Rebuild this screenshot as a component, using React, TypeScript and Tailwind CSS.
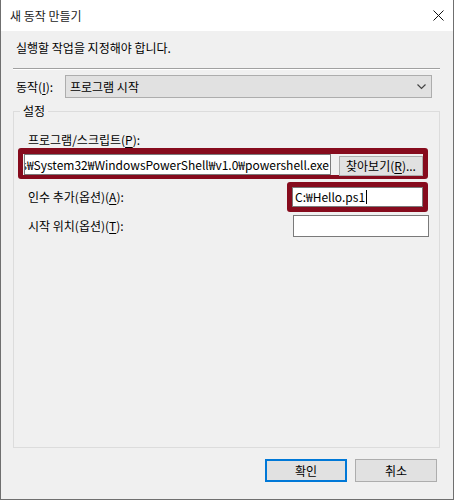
import { ReactNode } from "react";

const font = { fontFamily: '"Noto Sans CJK KR", "Noto Sans", sans-serif' };

const Key = ({ children }: { children: ReactNode }) => <span className="underline underline-offset-2">{children}</span>;

const CloseIcon = () => (
  <svg width="11" height="11" viewBox="0 0 11 11" className="text-[#111]">
    <path d="M0.5 0.5 L10.5 10.5 M10.5 0.5 L0.5 10.5" stroke="currentColor" strokeWidth="1" fill="none" />
  </svg>
);

const Chevron = () => (
  <svg width="9" height="6" viewBox="0 0 9 6" className="text-[#444]">
    <path d="M0.5 0.5 L4.5 4.5 L8.5 0.5" stroke="currentColor" strokeWidth="1.2" fill="none" />
  </svg>
);

const App = () => {
  return (
    <div
      className="w-[454px] h-[500px] flex flex-col bg-[#f0f0f0] border-l border-r border-b border-[#6f6f6f] text-[12px] leading-4 text-black"
      style={font}
    >
      <div className="h-[31px] shrink-0 bg-white flex items-center justify-between pl-[9px] pr-[9px]">
        <span className="text-[#1a1a1a]">새 동작 만들기</span>
        <CloseIcon />
      </div>

      <div className="flex-1 flex flex-col px-[12px]">
        <div className="mt-[9px] pl-[3px]">실행할 작업을 지정해야 합니다.</div>
        <div className="mt-[12px] mr-[1px] border-t border-[#a0a0a0] border-b border-b-white" />

        <div className="mt-[5px] flex items-center mr-[9px]">
          <div className="w-[52px] pl-[3px] shrink-0">
            동작(<Key>I</Key>):
          </div>
          <div className="flex-1 h-[23px] bg-[#e1e1e1] border border-[#adadad] flex items-center justify-between pl-[4px] pr-[5px]">
            <span>프로그램 시작</span>
            <Chevron />
          </div>
        </div>

        <fieldset className="mt-[5px] mr-[1px] h-[345px] border border-[#dcdcdc]">
          <legend className="ml-[6px] px-[3px]">설정</legend>
          <div className="flex flex-col pl-[4px] pr-[11px]">
            <div className="mt-[13px] pl-[10px]">
              프로그램/스크립트(<Key>P</Key>):
            </div>
            <div className="h-[31px] flex items-stretch gap-[8px] border-x-[5px] border-t-[6px] border-b-[4px] border-[#860b1d] rounded-[3px] pl-[1px]">
              <div className="w-[307px] bg-white border border-[#7a7a7a] flex items-center justify-end overflow-hidden whitespace-nowrap pr-[1px]">
                <span>C:₩Windows₩System32₩WindowsPowerShell₩v1.0₩powershell.exe</span>
              </div>
              <div className="flex-1 self-end h-[20px] mb-[-1px] bg-[#e1e1e1] border border-[#adadad] flex items-center justify-center">
                찾아보기(<Key>R</Key>)...
              </div>
            </div>

            <div className="mt-[3px] flex items-center">
              <div className="flex-1 pl-[10px]">
                인수 추가(옵션)(<Key>A</Key>):
              </div>
              <div className="w-[141px] h-[30px] border-[5px] border-[#860b1d] rounded-[3px] flex">
                <div className="flex-1 bg-white border border-[#7a7a7a] flex items-center pl-[2px]">
                  <span>C:₩Hello.ps1</span>
                  <span className="w-px h-[14px] bg-black ml-px" />
                </div>
              </div>
            </div>

            <div className="mt-[3px] flex items-center">
              <div className="flex-1 pl-[10px]">
                시작 위치(옵션)(<Key>T</Key>):
              </div>
              <div className="w-[136px] h-[22px] mr-[-1px] bg-white border border-[#7a7a7a]" />
            </div>
          </div>
        </fieldset>

        <div className="mt-[11px] mr-[4px] flex justify-end gap-[8px]">
          <div className="w-[82px] h-[23px] bg-[#e1e1e1] border-2 border-[#0078d7] flex items-center justify-center">확인</div>
          <div className="w-[82px] h-[23px] bg-[#e1e1e1] border border-[#adadad] flex items-center justify-center">취소</div>
        </div>
      </div>
    </div>
  );
};

export default App;
